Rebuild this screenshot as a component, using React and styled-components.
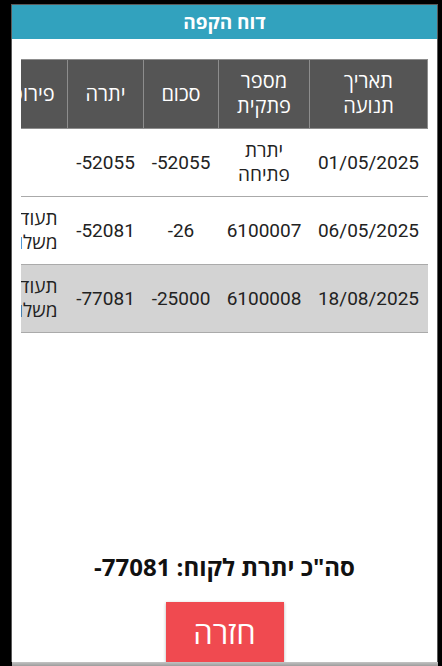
import React from "react";
import styled, { createGlobalStyle } from "styled-components";

const GlobalStyle = createGlobalStyle`
  html, body {
    margin: 0;
    padding: 0;
    background: #000;
  }
  body {
    font-family: Roboto, "Open Sans", "Liberation Sans", sans-serif;
  }
`;

const Screen = styled.div`
  width: 442px;
  height: 666px;
  display: flex;
  flex-direction: column;
  background: #000;
  overflow: hidden;
`;

const Dialog = styled.div`
  flex: 1;
  min-height: 0;
  margin: 4px 4px 0 11px;
  border: 1px solid #5a5a5a;
  border-bottom: none;
  background: #fff;
  display: flex;
  flex-direction: column;
  overflow: hidden;
  direction: rtl;
`;

const TitleBar = styled.div`
  height: 34px;
  flex-shrink: 0;
  background: #32a2be;
  color: #fff;
  font-family: "Open Sans", "Liberation Sans", sans-serif;
  font-weight: bold;
  font-size: 19px;
  display: flex;
  align-items: center;
  justify-content: center;
`;

const Body = styled.div`
  flex: 1;
  min-height: 0;
  display: flex;
  flex-direction: column;
  align-items: center;
  padding: 20px 9px 0;
`;

const TableScroll = styled.div`
  align-self: stretch;
  flex: 1;
  min-height: 0;
  overflow: hidden;
  direction: rtl;
`;

const Table = styled.table`
  border-collapse: collapse;
  table-layout: fixed;
  width: 430px;
`;

const HeadCell = styled.th`
  box-sizing: border-box;
  width: ${({ w }) => w}px;
  background: #555;
  color: #fff;
  border: 1px solid #8d8d8d;
  font-weight: 500;
  font-size: 20px;
  line-height: 25px;
  padding: 9px 2px;
  text-align: center;
`;

const Row = styled.tr`
  background: ${({ shaded }) => (shaded ? "#d3d3d3" : "#fff")};
  border-bottom: 1px solid #aaa;
`;

const Cell = styled.td`
  box-sizing: border-box;
  color: #222;
  font-size: 19px;
  line-height: 24px;
  padding: ${({ start }) => (start ? "10px 10px 9px 2px" : "10px 4px 9px")};
  text-align: ${({ start }) => (start ? "right" : "center")};
  vertical-align: middle;
`;

const Num = styled.span`
  direction: ltr;
  unicode-bidi: isolate;
`;

const Total = styled.div`
  font-family: "Open Sans", "Liberation Sans", sans-serif;
  font-weight: bold;
  font-size: 24px;
  line-height: 30px;
  color: #111;
  margin-bottom: 20px;
`;

const BackButton = styled.button`
  width: 118px;
  height: 60px;
  flex-shrink: 0;
  border: none;
  background: #f04a50;
  color: #fff;
  font-family: "Open Sans", "Liberation Sans", sans-serif;
  font-size: 31px;
  box-shadow: 0 1px 3px rgba(0, 0, 0, 0.3);
  cursor: pointer;
`;

const BottomBar = styled.div`
  height: 4px;
  margin: 0 4px 0 12px;
  background: linear-gradient(#c4c4c4, #9c9c9c);
`;

const columns = [
  { title: ["תאריך", "תנועה"], w: 118 },
  { title: ["מספר", "פתקית"], w: 91 },
  { title: ["סכום"], w: 75 },
  { title: ["יתרה"], w: 76 },
  { title: ["פירוט"], w: 70 },
];

const rows = [
  { date: "01/05/2025", ref: "יתרת פתיחה", amount: "-52055", balance: "-52055", details: "" },
  { date: "06/05/2025", ref: "6100007", amount: "-26", balance: "-52081", details: "תעוד משלוח" },
  { date: "18/08/2025", ref: "6100008", amount: "-25000", balance: "-77081", details: "תעוד משלוח", shaded: true },
];

const App = () => {
  return (
    <Screen>
      <GlobalStyle />
      <Dialog>
        <TitleBar>דוח הקפה</TitleBar>
        <Body>
          <TableScroll>
            <Table>
              <thead>
                <tr>
                  {columns.map((c, i) => (
                    <HeadCell key={i} w={c.w}>
                      {c.title.map((t, j) => (
                        <React.Fragment key={j}>
                          {j > 0 && <br />}
                          {t}
                        </React.Fragment>
                      ))}
                    </HeadCell>
                  ))}
                </tr>
              </thead>
              <tbody>
                {rows.map((r, i) => (
                  <Row key={i} shaded={r.shaded}>
                    <Cell>{r.date}</Cell>
                    <Cell>{r.ref}</Cell>
                    <Cell><Num>{r.amount}</Num></Cell>
                    <Cell><Num>{r.balance}</Num></Cell>
                    <Cell start>{r.details}</Cell>
                  </Row>
                ))}
              </tbody>
            </Table>
          </TableScroll>
          <Total>
            סה"כ יתרת לקוח: <Num>-77081</Num>
          </Total>
          <BackButton>חזרה</BackButton>
        </Body>
      </Dialog>
      <BottomBar />
    </Screen>
  );
};

export default App;
